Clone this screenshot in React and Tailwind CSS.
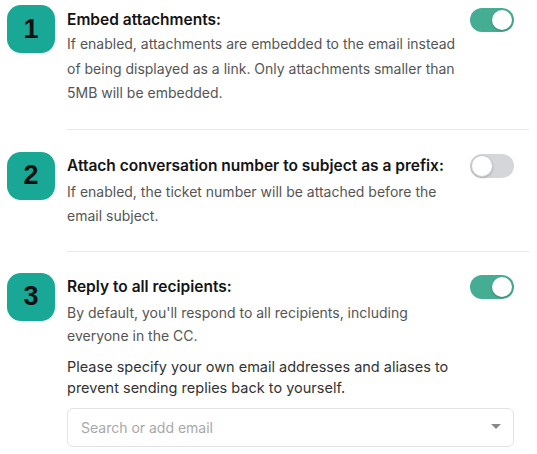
import React from "react";

function Badge({ n }) {
  return (
    <div className="w-12 h-12 shrink-0 rounded-[14px] bg-[#18a895] flex items-center justify-center">
      <span className="text-[27px] font-bold text-[#111] leading-none" style={{ fontFamily: '"Liberation Sans", Arial, sans-serif' }}>{n}</span>
    </div>
  );
}

function Toggle({ on }) {
  return on ? (
    <div className="w-11 h-6 shrink-0 rounded-full bg-[#45ad93] flex items-center justify-end pr-[2px]">
      <div className="w-5 h-5 rounded-full bg-white shadow-[0_1px_2px_rgba(0,0,0,0.25)]" />
    </div>
  ) : (
    <div className="w-11 h-6 shrink-0 rounded-full bg-[#d4d6da] flex items-center justify-start pl-[1px]">
      <div className="w-[22px] h-[22px] rounded-full bg-white border border-[#c9cbcf] shadow-[0_1px_2px_rgba(0,0,0,0.2)]" />
    </div>
  );
}

function Section({ n, title, on, children, top }) {
  return (
    <div className="flex">
      <div className={top}>
        <Badge n={n} />
      </div>
      <div className="flex-1 ml-3">
        <div className="mr-[15px]">
          <div className="flex items-center justify-between h-6">
            <span className="text-[15.5px] font-semibold text-[#141414] leading-6">{title}</span>
            <Toggle on={on} />
          </div>
          <div className="max-w-[398px]">{children}</div>
        </div>
      </div>
    </div>
  );
}

export default function App() {
  return (
    <div className="w-[537px] h-[454px] bg-white pl-[7px] pr-[8px] overflow-hidden" style={{ fontFamily: 'Inter, "Noto Sans", sans-serif' }}>
      <div className="pt-[8px]">
        <Section n="1" title="Embed attachments:" on top="-mt-[3px]">
          <p className="text-[14px] leading-[24.5px] text-[#555]">
            If enabled, attachments are embedded to the email instead of being displayed as a link. Only attachments smaller than 5MB will be embedded.
          </p>
        </Section>
      </div>
      <div className="ml-[60px] mt-[23px] h-px bg-[#e8e8e8]" />
      <div className="pt-[24px]">
        <Section n="2" title="Attach conversation number to subject as a prefix:" on={false} top="-mt-[2px]">
          <p className="mt-[2px] text-[14px] leading-[24px] text-[#555]">
            If enabled, the ticket number will be attached before the email subject.
          </p>
        </Section>
      </div>
      <div className="ml-[60px] mt-[23px] h-px bg-[#e8e8e8]" />
      <div className="pt-[23px]">
        <Section n="3" title="Reply to all recipients:" on top="-mt-[2px]">
          <p className="mt-[2px] text-[14px] leading-[23.5px] text-[#555]">
            By default, you'll respond to all recipients, including everyone in the CC.
          </p>
          <p className="mt-[8px] text-[14.5px] leading-[21.5px] text-[#333]">
            Please specify your own email addresses and aliases to prevent sending replies back to yourself.
          </p>
        </Section>
        <div className="flex">
          <div className="w-12 shrink-0" />
          <div className="flex-1 ml-3 mr-[15px]">
            <div className="mt-[9px] h-[39px] border border-[#e3e3e3] rounded-md flex items-center justify-between pl-[13px] pr-[12px]">
              <span className="text-[14px] text-[#a8a8a8]">Search or add email</span>
              <svg width="10" height="6" viewBox="0 0 10 6"><path d="M0 0 L10 0 L5 5 Z" fill="#8a8a8a" /></svg>
            </div>
          </div>
        </div>
      </div>
    </div>
  );
}
